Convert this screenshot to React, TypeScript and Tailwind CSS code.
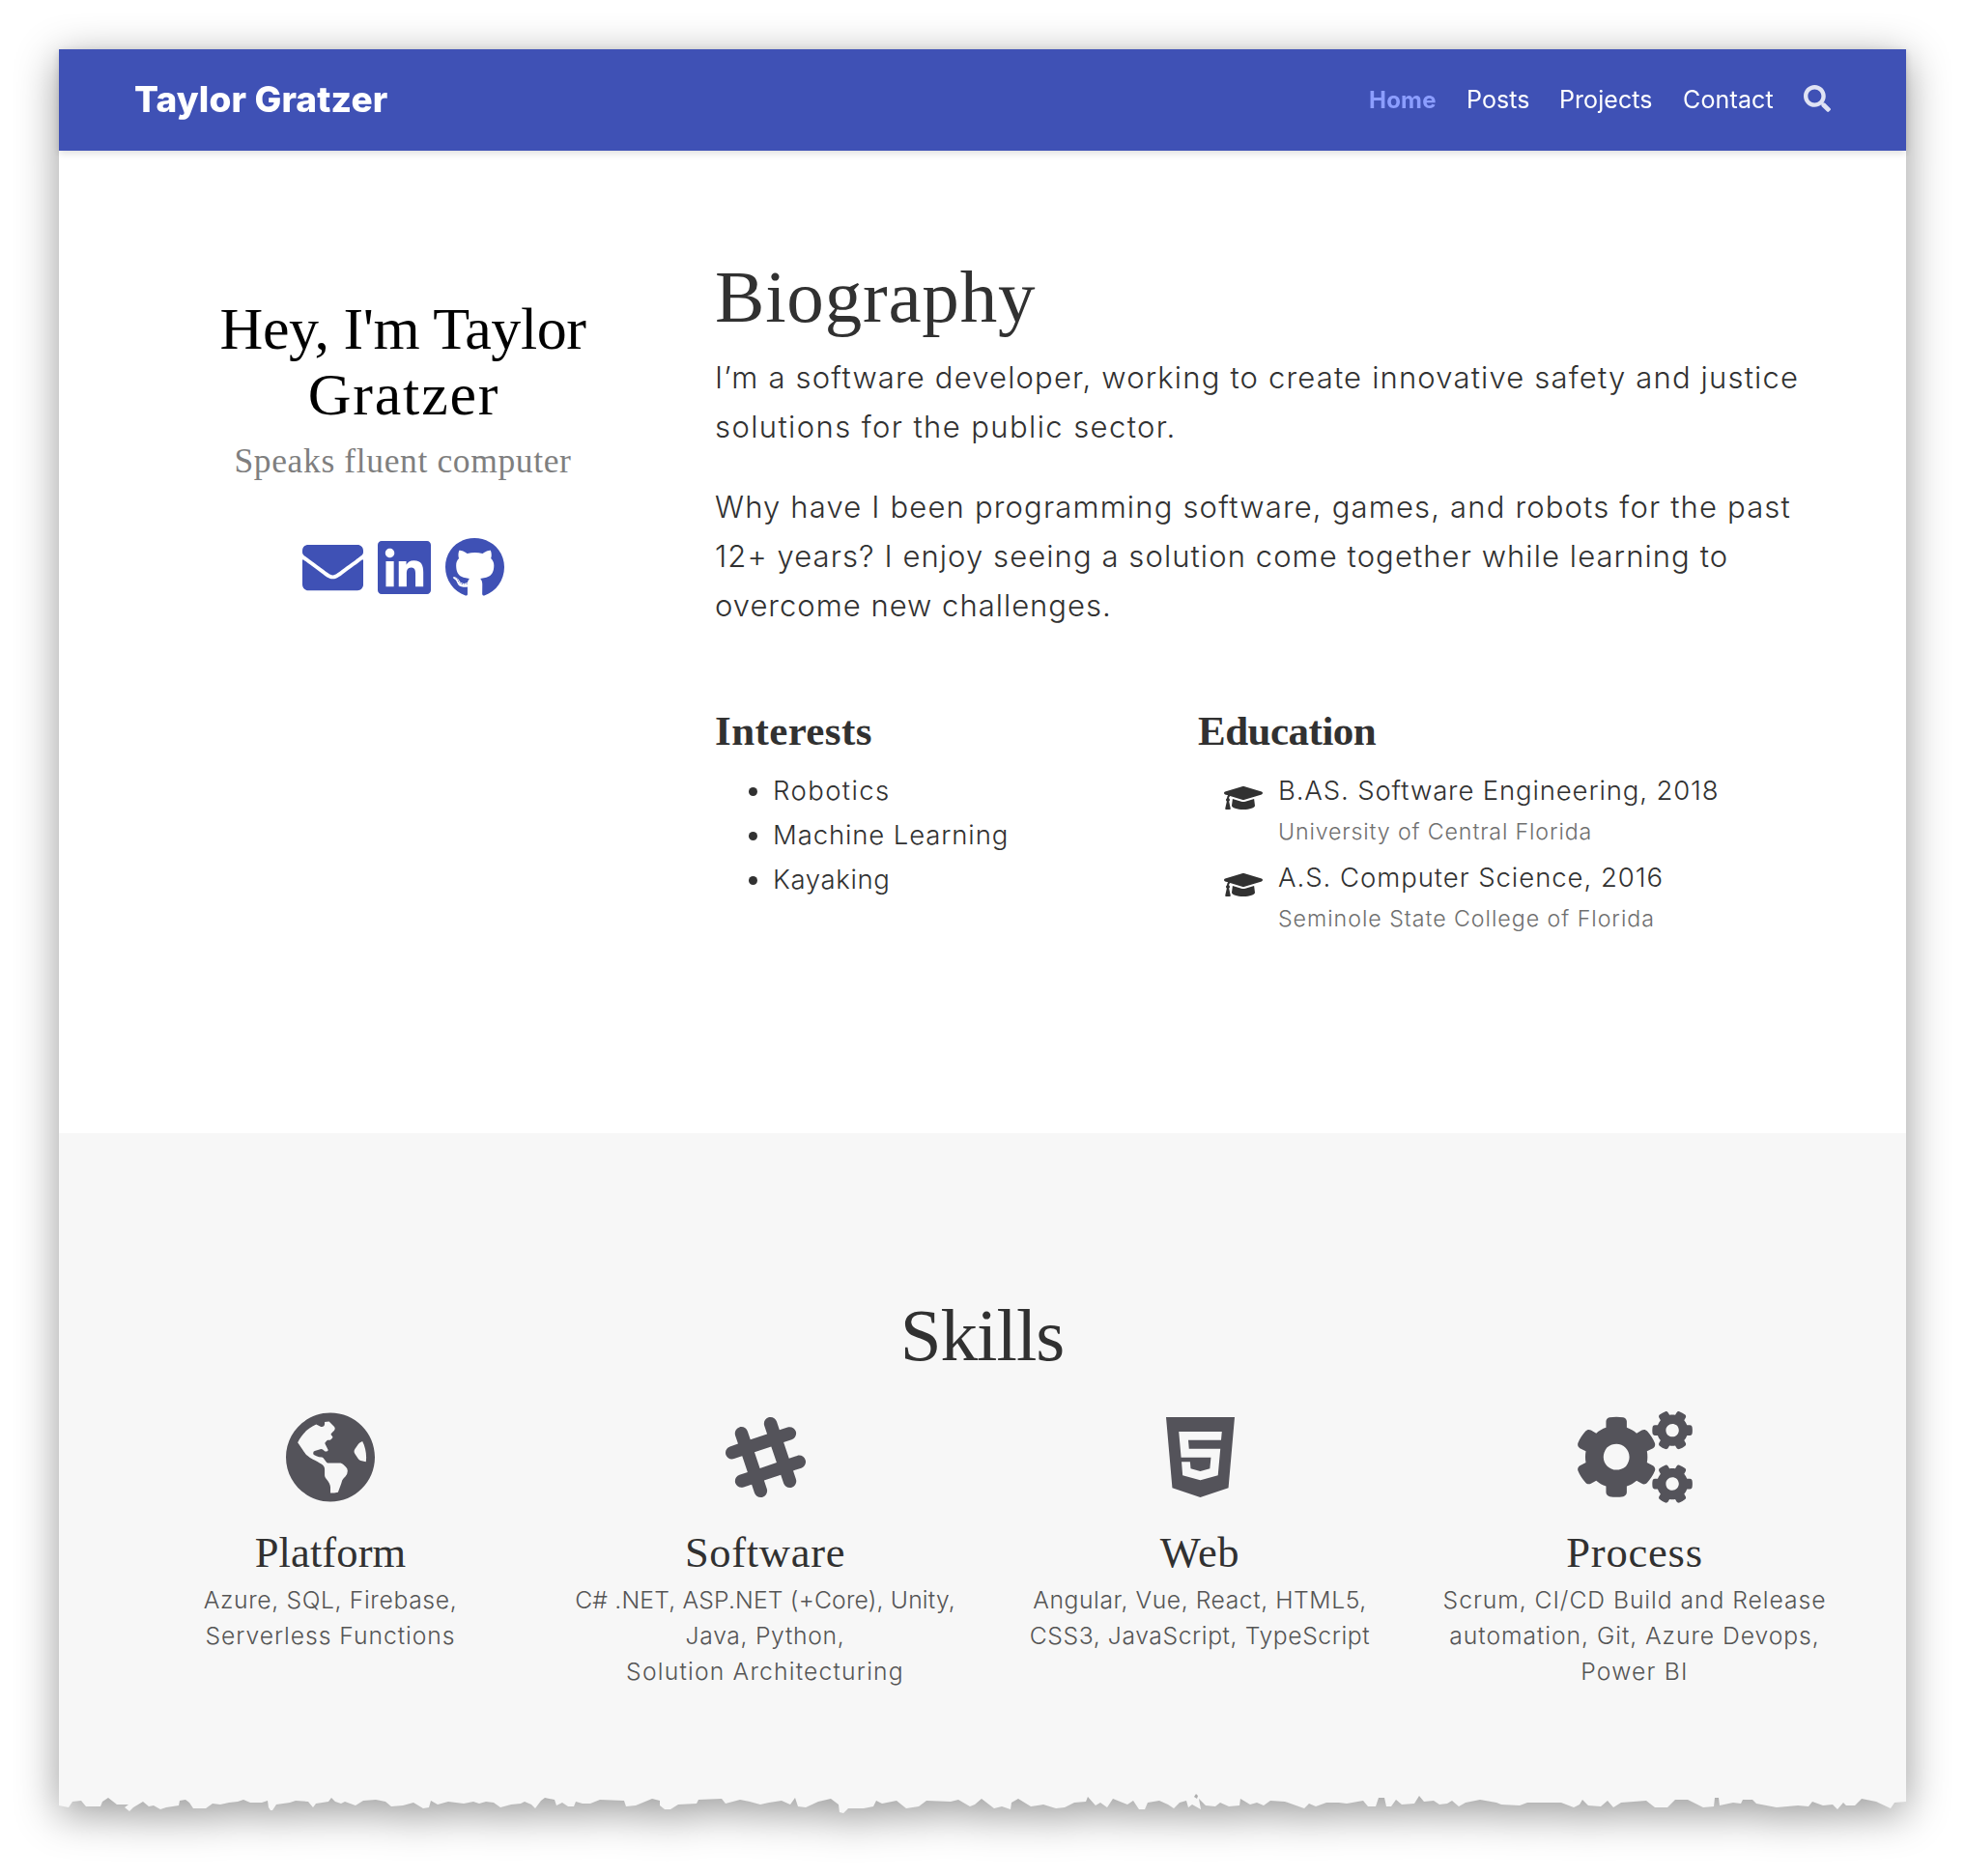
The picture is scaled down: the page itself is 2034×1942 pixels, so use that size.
import type { ReactNode } from "react";
import {
  FaCogs,
  FaEnvelope,
  FaGithub,
  FaGlobeAmericas,
  FaGraduationCap,
  FaHtml5,
  FaLinkedin,
  FaSearch,
  FaSlackHash,
} from "react-icons/fa";

const SERIF = "font-['Liberation_Serif',serif]";

const TORN_EDGE =
  "M0,35 L0,49 10,51 14,45 23,44 28,50 43,50 45,45 51,41 60,48 72,48 68,51 73,55 77,51 87,45 93,50 98,49 105,53 111,51 124,49 125,44 131,43 135,46 139,52 152,52 159,47 167,48 176,46 185,45 191,43 198,46 210,46 216,44 217,51 219,54 221,54 225,48 239,46 245,44 258,45 263,51 266,47 279,45 282,41 286,45 292,47 296,45 307,49 315,44 328,43 338,45 344,50 356,49 367,46 377,52 383,51 385,44 392,48 403,45 419,47 429,45 435,47 442,45 450,46 457,51 468,48 478,47 482,45 489,48 493,52 499,44 503,41 513,43 515,49 521,46 527,50 533,50 535,45 542,47 550,47 560,43 585,44 587,50 597,49 614,42 622,44 622,49 627,53 633,53 641,48 660,47 662,43 686,42 690,47 705,43 715,45 726,48 735,46 748,44 757,48 762,41 765,50 773,51 786,45 799,42 807,48 808,56 812,57 817,52 833,52 843,50 846,44 852,47 867,44 877,52 890,50 898,44 923,45 931,43 943,50 948,48 955,42 968,52 976,50 985,53 986,46 993,42 1006,50 1019,48 1032,52 1041,51 1051,46 1063,45 1065,40 1073,49 1078,46 1085,51 1091,42 1106,48 1112,44 1118,53 1124,53 1127,46 1139,44 1148,48 1154,52 1160,46 1167,44 1169,51 1173,48 1182,53 1180,42 1187,49 1197,50 1202,46 1211,50 1222,49 1223,42 1233,48 1240,46 1247,49 1254,44 1269,45 1289,52 1294,47 1301,50 1312,46 1325,46 1333,47 1350,44 1355,50 1363,50 1366,41 1372,41 1374,50 1379,50 1384,43 1390,48 1403,47 1408,39 1413,45 1423,44 1429,48 1437,47 1442,44 1449,50 1456,46 1471,43 1488,46 1493,48 1512,49 1520,46 1555,46 1568,51 1574,48 1577,43 1583,49 1596,50 1603,44 1609,51 1617,46 1630,45 1643,44 1652,51 1665,51 1673,43 1686,43 1702,51 1713,50 1714,41 1718,41 1719,49 1733,46 1741,47 1743,43 1753,43 1757,47 1778,51 1800,49 1811,50 1815,45 1826,49 1836,48 1841,53 1847,46 1850,49 1859,49 1866,42 1881,45 1896,52 1900,46 1912,45 L1912,35 Z M1177,37 L1175,40 1178,42 1179,39 Z";

function Header() {
  return (
    <header className="relative z-10 flex h-[105px] items-center justify-between bg-[#3f51b5] pl-[78px] pr-[78px] text-white shadow-[0_2px_8px_rgba(0,0,0,0.15)]">
      <a className="-mt-px text-[37px] font-extrabold tracking-[0.15px]">Taylor Gratzer</a>
      <nav className="flex items-center text-[25px]">
        <a className="w-[101px] text-[24px] font-bold tracking-[0.2px] text-[#8c9eff]">Home</a>
        <a className="w-[96px] tracking-[0.1px]">Posts</a>
        <a className="w-[128px] tracking-[0.08px]">Projects</a>
        <a className="w-[125px] tracking-[0.15px]">Contact</a>
        <FaSearch className="mb-[3px] size-7 text-[#e0e3f4]" />
      </nav>
    </header>
  );
}

function Profile() {
  return (
    <div className="ml-[78px] w-[556px] pt-[150px] text-center">
      <h2 className={`${SERIF} text-[62px] leading-[68px] text-black`}>
        <span className="block tracking-[-0.45px]">Hey, I'm Taylor</span>
        <span className="block pl-[2px] tracking-[1.8px]">Gratzer</span>
      </h2>
      <h3 className={`${SERIF} mt-[14px] text-[35.5px] leading-[42px] tracking-[0.63px] text-[#7f7f7f]`}>
        Speaks fluent computer
      </h3>
      <div className="mt-[58px] flex items-center justify-center gap-[15px] text-[#3f51b5]">
        <FaEnvelope className="size-[63px]" />
        <FaLinkedin className="h-[63px] w-[55px]" />
        <FaGithub className="h-[63px] w-[61px]" />
      </div>
    </div>
  );
}

function Interest({ className, children }: { className: string; children: ReactNode }) {
  return (
    <li className="flex items-center gap-4 pl-[35px]">
      <span className="mt-[2px] size-[9px] rounded-full bg-[#313131]" />
      <span className={className}>{children}</span>
    </li>
  );
}

function Degree({ course, school }: { course: ReactNode; school: ReactNode }) {
  return (
    <li className="mb-1 flex gap-[15px] pl-[27px]">
      <FaGraduationCap className="mt-[15px] h-8 w-10" />
      <div>
        <p>{course}</p>
        <p className="text-[23.2px] leading-10 text-[#6f6f6f]">{school}</p>
      </div>
    </li>
  );
}

function Biography() {
  return (
    <div className="ml-[45px] w-[1155px] pt-[111px] font-light text-[#313131]">
      <h1 className={`${SERIF} text-[77px] font-normal leading-[80px] tracking-[0.8px]`}>Biography</h1>
      <div className="mt-[18px] whitespace-nowrap text-[31px] leading-[51px]">
        <p>
          <span className="block tracking-[1.17px]">
            I’m a software developer, working to create innovative safety and justice
          </span>
          <span className="block tracking-[1.4px]">solutions for the public sector.</span>
        </p>
        <p className="mt-8">
          <span className="block tracking-[1.17px]">
            Why have I been programming software, games, and robots for the past
          </span>
          <span className="block tracking-[1.08px]">
            12+ years? I enjoy seeing a solution come together while learning to
          </span>
          <span className="block tracking-[1px]">overcome new challenges.</span>
        </p>
      </div>
      <div className="mt-[81px] flex text-[27.5px] leading-[46px]">
        <div className="w-[500px]">
          <h3 className={`${SERIF} text-[43px] font-bold leading-[48px] tracking-[0.4px]`}>Interests</h3>
          <ul className="mt-[14px]">
            <Interest className="tracking-[1.4px]">Robotics</Interest>
            <Interest className="tracking-[0.88px]">Machine Learning</Interest>
            <Interest className="tracking-[0.65px]">Kayaking</Interest>
          </ul>
        </div>
        <div>
          <h3 className={`${SERIF} text-[43px] font-bold leading-[48px] tracking-[-0.5px]`}>Education</h3>
          <ul className="mt-[14px]">
            <Degree
              course={<span className="pl-px tracking-[0.86px]">B.AS. Software Engineering, 2018</span>}
              school={<span className="pl-px tracking-[0.86px]">University of Central Florida</span>}
            />
            <Degree
              course={<span className="pl-px tracking-[0.96px]">A.S. Computer Science, 2016</span>}
              school={<span className="pl-px tracking-[0.96px]">Seminole State College of Florida</span>}
            />
          </ul>
        </div>
      </div>
    </div>
  );
}

function Skill({ icon, title, children }: { icon: ReactNode; title: ReactNode; children: ReactNode }) {
  return (
    <div className="flex flex-col items-center whitespace-nowrap text-center">
      <div className="text-[#54535a]">{icon}</div>
      <h3 className={`${SERIF} mt-[27px] text-[44.5px] leading-[48px] text-[#313131]`}>{title}</h3>
      <p className="mt-[7px] text-[24.7px] font-light leading-[37px] text-[#555]">{children}</p>
    </div>
  );
}

function Skills() {
  return (
    <section className="h-[682px] bg-[#f7f7f7] pt-[169px]">
      <h1 className={`${SERIF} pr-px text-center text-[77px] leading-[80px] tracking-[-1px] text-[#313131]`}>
        Skills
      </h1>
      <div className="mx-14 mt-[39px] grid grid-cols-4">
        <Skill
          icon={<FaGlobeAmericas className="h-[95px] w-[92px]" />}
          title={<span className="tracking-[0.1px]">Platform</span>}
        >
          <span className="block tracking-[0.64px]">Azure, SQL, Firebase,</span>
          <span className="block tracking-[0.95px]">Serverless Functions</span>
        </Skill>
        <Skill
          icon={<FaSlackHash className="h-[95px] w-[83px]" />}
          title={<span className="tracking-[0.7px]">Software</span>}
        >
          <span className="block tracking-[0.18px]">C# .NET, ASP.NET (+Core), Unity,</span>
          <span className="block tracking-[0.7px]">Java, Python,</span>
          <span className="block tracking-[1.19px]">Solution Architecturing</span>
        </Skill>
        <Skill
          icon={<FaHtml5 className="h-[95px] w-[71px]" />}
          title={<span className="tracking-[0.66px]">Web</span>}
        >
          <span className="block tracking-[0.57px]">Angular, Vue, React, HTML5,</span>
          <span className="block tracking-[0.6px]">CSS3, JavaScript, TypeScript</span>
        </Skill>
        <Skill
          icon={<FaCogs className="h-[95px] w-[119px]" />}
          title={<span className="tracking-[0.8px]">Process</span>}
        >
          <span className="block tracking-[0.95px]">Scrum, CI/CD Build and Release</span>
          <span className="block tracking-[0.95px]">automation, Git, Azure Devops,</span>
          <span className="block tracking-[1.2px]">Power BI</span>
        </Skill>
      </div>
    </section>
  );
}

export default function App() {
  return (
    <div className="h-[1942px] w-[2034px] overflow-hidden bg-white px-[61px] pt-[51px] font-['Inter',sans-serif]">
      <main className="drop-shadow-[0_10px_22px_rgba(0,0,0,0.4)]">
        <Header />
        <section className="flex h-[1017px] bg-white">
          <Profile />
          <Biography />
        </section>
        <Skills />
        <svg className="block h-[23px] w-[1912px] text-[#f7f7f7]" viewBox="0 35 1912 23" fill="currentColor" fillRule="evenodd">
          <path d={TORN_EDGE} />
        </svg>
      </main>
    </div>
  );
}
